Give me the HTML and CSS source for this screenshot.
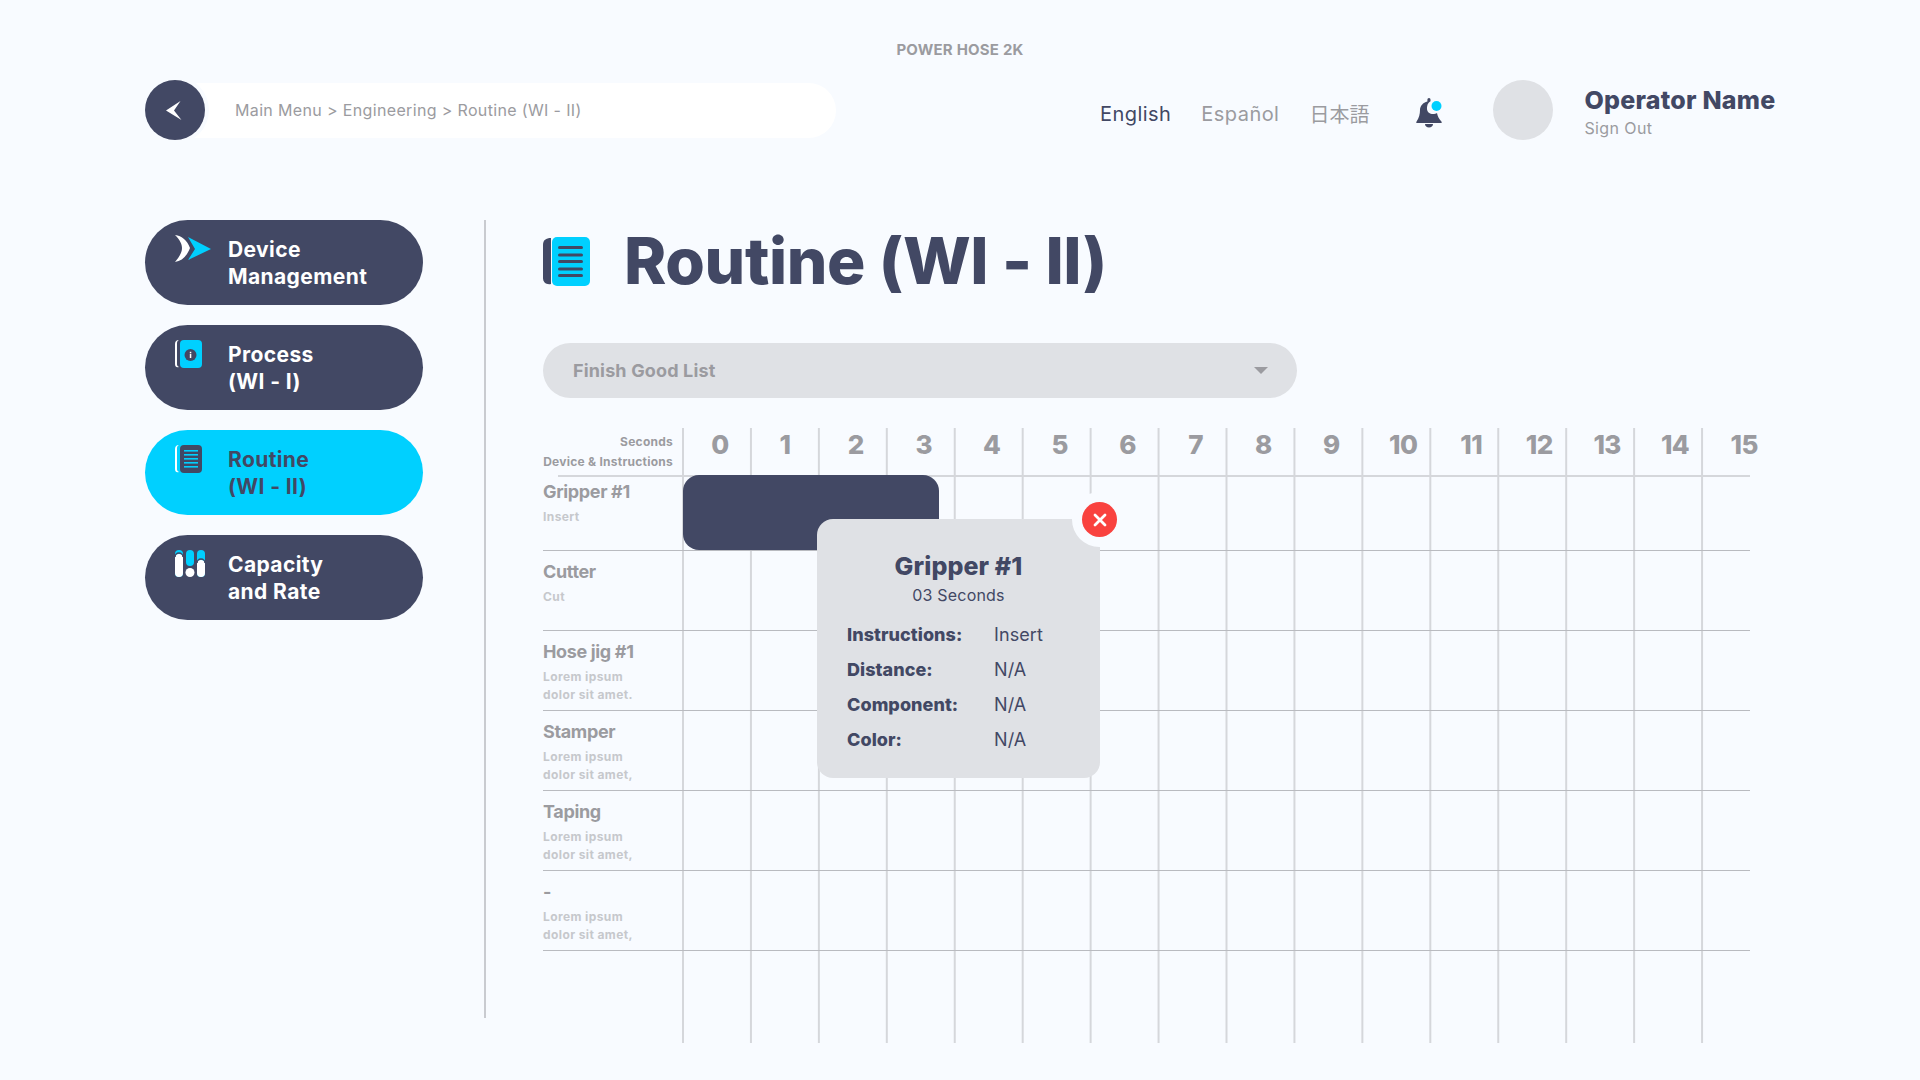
FILE: index.html
```html
<!DOCTYPE html>
<html lang="en">
<head>
    <meta charset="UTF-8">
    <title>Power Hose 2K - Routine (WI - II)</title>
    <link rel="stylesheet" href="styles.css">
</head>
<body>
    <div class="page">
        <div class="app-name">POWER HOSE 2K</div>

        <header class="topbar">
            <div class="crumbs">
                <button class="back-btn">
                    <svg width="16" height="19" viewBox="0 0 16 19"><path d="M14.500 0 L0 9.500 L15.500 19 L8 9.500 Z" fill="#fff"/></svg>
                </button>
                <span class="crumbs-text">Main Menu &gt; Engineering &gt; Routine (WI - II)</span>
            </div>
            <nav class="langs">
                <span class="lang lang-active">English</span>
                <span class="lang">Español</span>
                <span class="lang lang-jp">日本語</span>
            </nav>
            <svg class="bell" width="26" height="30" viewBox="0 0 26 30">
                <path d="M14.500 3.300C11.500 5 11 8 11 11c0 3 3 5 6 5 1.500 0 3-.4 4-1 .5 3 2 6 4.400 8.400.6.600.4 1.600-.4 1.600H1c-.8 0-1-1-.4-1.600C3 20 4 16 4 12c0-4 3-7.500 7.400-8.500V2c0-1.200.6-2 1.600-2s1.500.8 1.500 2z" fill="#424864"/>
                <path d="M9 26h8c0 2-1.800 3.500-4 3.500S9 28 9 26z" fill="#424864"/>
                <circle cx="20.500" cy="8" r="5" fill="#00d0ff"/>
            </svg>
            <div class="avatar"></div>
            <div class="operator">
                <div class="operator-name">Operator Name</div>
                <div class="sign-out">Sign Out</div>
            </div>
        </header>

        <div class="main">
            <aside class="sidebar">
                <a class="nav-item">
                    <svg class="nav-icon" width="36" height="27" viewBox="0 0 36 27">
                        <path d="M0 0 C7 1 12 5 15 13 C12 21 7 26 0 27 C5 21 7 17 7 13 C7 9 5 5 0 0 Z" fill="#fff"/>
                        <path d="M13 2 L36 14 L13 25 L20 14 Z" fill="#00d0ff"/>
                    </svg>
                    <span>Device<br>Management</span>
                </a>
                <a class="nav-item">
                    <svg class="nav-icon" width="27" height="28" viewBox="0 0 27 28">
                        <path d="M4 0 C1 0 0 2 0 4 V24 C0 26 1 28 4 27 C2 26 2 25 2 24 V4 C2 2 2 1 4 0 Z" fill="#fff"/>
                        <rect x="5" y="0" width="22" height="28" rx="4" fill="#00d0ff"/>
                        <circle cx="15.500" cy="15" r="6" fill="#424864"/>
                        <rect x="14.800" y="14" width="1.500" height="4" fill="#fff"/>
                        <rect x="14.800" y="11.800" width="1.500" height="1.500" fill="#fff"/>
                    </svg>
                    <span>Process<br>(WI - I)</span>
                </a>
                <a class="nav-item nav-item-active">
                    <svg class="nav-icon" width="27" height="28" viewBox="0 0 27 28">
                        <path d="M4 0 C1 0 0 2 0 4 V24 C0 26 1 28 4 27 C2 26 2 25 2 24 V4 C2 2 2 1 4 0 Z" fill="#fff"/>
                        <rect x="5" y="0" width="22" height="28" rx="4" fill="#424864"/>
                        <g fill="#00d0ff">
                            <rect x="9" y="5" width="14" height="1.600"/>
                            <rect x="9" y="9" width="14" height="1.600"/>
                            <rect x="9" y="13" width="14" height="1.600"/>
                            <rect x="9" y="17" width="14" height="1.600"/>
                            <rect x="9" y="21" width="14" height="1.600"/>
                        </g>
                    </svg>
                    <span>Routine<br>(WI - II)</span>
                </a>
                <a class="nav-item">
                    <svg class="nav-icon" width="30" height="27" viewBox="0 0 30 27">
                        <rect x="0" y="0" width="8" height="27" rx="4" fill="#00d0ff"/>
                        <path d="M0 8 a4 4 0 0 1 8 0 V23 a4 4 0 0 1 -8 0 Z" fill="#fff"/>
                        <path d="M0 7 a4 4 0 0 1 8 0" fill="none" stroke="#424864" stroke-width="1.500"/>
                        <rect x="11" y="0" width="8" height="16" rx="4" fill="#00d0ff"/>
                        <circle cx="15" cy="22.500" r="4.500" fill="#fff"/>
                        <rect x="22" y="0" width="8" height="27" rx="4" fill="#00d0ff"/>
                        <path d="M22 14 a4 4 0 0 1 8 0 V23 a4 4 0 0 1 -8 0 Z" fill="#fff"/>
                        <path d="M22 13 a4 4 0 0 1 8 0" fill="none" stroke="#424864" stroke-width="1.500"/>
                    </svg>
                    <span>Capacity<br>and Rate</span>
                </a>
            </aside>

            <section class="content">
                <div class="page-title">
                    <svg width="47" height="49" viewBox="0 0 47 49">
                        <path d="M8 1 C3 1 0 3 0 8 V41 C0 45 3 48 8 47 V1 Z" fill="#424864"/>
                        <rect x="9" y="0" width="38" height="49" rx="5" fill="#00d0ff"/>
                        <g fill="#424864">
                            <rect x="15" y="9" width="25" height="3" rx="1.500"/>
                            <rect x="15" y="16.500" width="25" height="3" rx="1.500"/>
                            <rect x="15" y="23" width="25" height="3" rx="1.500"/>
                            <rect x="15" y="30.500" width="25" height="3" rx="1.500"/>
                            <rect x="15" y="37" width="25" height="3" rx="1.500"/>
                        </g>
                    </svg>
                    <h1>Routine (WI - II)</h1>
                </div>

                <div class="select-box">
                    <span>Finish Good List</span>
                    <span class="caret"></span>
                </div>

                <div class="chart">
                    <div class="chart-lines"></div>

                    <div class="chart-head">
                        <div class="head-labels">
                            <div>Seconds</div>
                            <div>Device &amp; Instructions</div>
                        </div>
                        <div class="sec">0</div><div class="sec sec-one">1</div><div class="sec">2</div><div class="sec">3</div>
                        <div class="sec">4</div><div class="sec">5</div><div class="sec">6</div><div class="sec">7</div>
                        <div class="sec">8</div><div class="sec">9</div><div class="sec sec-wide">10</div><div class="sec sec-wide">11</div>
                        <div class="sec sec-wide">12</div><div class="sec sec-wide">13</div><div class="sec sec-wide">14</div><div class="sec">15</div>
                    </div>

                    <div class="row row-first">
                        <div class="row-name">Gripper #1</div>
                        <div class="row-sub">Insert</div>
                    </div>
                    <div class="row">
                        <div class="row-name">Cutter</div>
                        <div class="row-sub">Cut</div>
                    </div>
                    <div class="row">
                        <div class="row-name">Hose jig #1</div>
                        <div class="row-sub">Lorem ipsum<br>dolor sit amet.</div>
                    </div>
                    <div class="row">
                        <div class="row-name">Stamper</div>
                        <div class="row-sub">Lorem ipsum<br>dolor sit amet,</div>
                    </div>
                    <div class="row">
                        <div class="row-name">Taping</div>
                        <div class="row-sub">Lorem ipsum<br>dolor sit amet,</div>
                    </div>
                    <div class="row">
                        <div class="row-name">-</div>
                        <div class="row-sub">Lorem ipsum<br>dolor sit amet,</div>
                    </div>

                    <div class="bar"></div>

                    <div class="popup">
                        <button class="popup-close">
                            <svg width="14" height="14" viewBox="0 0 14 14"><path d="M2 2 L12 12 M12 2 L2 12" stroke="#fff" stroke-width="2.800" stroke-linecap="round"/></svg>
                        </button>
                        <h3>Gripper #1</h3>
                        <div class="popup-sub">03 Seconds</div>
                        <dl class="popup-info">
                            <dt>Instructions:</dt><dd>Insert</dd>
                            <dt>Distance:</dt><dd>N/A</dd>
                            <dt>Component:</dt><dd>N/A</dd>
                            <dt>Color:</dt><dd>N/A</dd>
                        </dl>
                    </div>
                </div>
            </section>
        </div>
    </div>
</body>
</html>
```

FILE: styles.css
```css
body {
    margin: 0;
    background-color: #f8fbff;
    font-family: Inter, "Noto Sans", sans-serif;
    color: #424864;
}

.page {
    width: 1920px;
    height: 1080px;
    overflow: hidden;
    padding: 40px 0 0 145px;
    box-sizing: border-box;
}

.app-name {
    margin-left: -145px;
    height: 20px;
    line-height: 20px;
    text-align: center;
    font-size: 15px;
    font-weight: 700;
    letter-spacing: 0.2px;
    color: #9b9ba0;
}

.topbar {
    display: flex;
    align-items: center;
    height: 60px;
    margin-top: 20px;
}

.crumbs {
    display: flex;
    align-items: center;
    flex: none;
    width: 691px;
    height: 55px;
    background-color: #fff;
    border-radius: 28px;
}

.back-btn {
    display: flex;
    align-items: center;
    justify-content: center;
    flex: none;
    width: 60px;
    height: 60px;
    padding: 0 2px 0 0;
    border: none;
    border-radius: 50%;
    background-color: #424864;
    box-shadow: 0 0 0 4px #f8fbff;
}

.crumbs-text {
    margin-left: 30px;
    font-size: 16px;
    letter-spacing: 0.35px;
    color: #9b9ba0;
}

.langs {
    display: flex;
    flex: none;
    align-items: center;
    height: 30px;
    margin-left: 264px;
    margin-top: 7px;
    gap: 30px;
    font-size: 20px;
    line-height: 30px;
    letter-spacing: 0.45px;
    color: #9b9ba0;
}

.lang-active {
    color: #424864;
}

.lang-jp {
    font-family: "Noto Sans CJK JP", sans-serif;
    letter-spacing: 0;
}

.bell {
    flex: none;
    margin-left: 47px;
    margin-top: 5px;
}

.avatar {
    flex: none;
    width: 60px;
    height: 60px;
    margin-left: 51px;
    border-radius: 50%;
    background-color: #dfe1e5;
}

.operator {
    flex: none;
    margin-left: 31px;
    padding-top: 4px;
}

.operator-name {
    font-size: 25px;
    line-height: 30px;
    font-weight: 800;
    letter-spacing: 0.25px;
}

.sign-out {
    font-size: 16px;
    line-height: 24px;
    margin-top: 1px;
    letter-spacing: 0.4px;
    color: #9b9ba0;
}

.main {
    display: flex;
    margin-top: 80px;
}

.sidebar {
    display: flex;
    flex-direction: column;
    gap: 20px;
    width: 278px;
    margin-right: 61px;
}

.nav-item {
    display: flex;
    height: 85px;
    box-sizing: border-box;
    padding: 15px 0 0 30px;
    border-radius: 43px;
    background-color: #424864;
    color: #fff;
    font-size: 21px;
    line-height: 27px;
    font-weight: 700;
    letter-spacing: 0.4px;
}

.nav-item span {
    position: absolute;
    margin-left: 53px;
    margin-top: 1px;
}

.nav-item-active {
    background-color: #00d0ff;
    color: #424864;
}

.content {
    width: 1267px;
    height: 798px;
    padding-left: 57px;
    border-left: 2px solid #c9cbd0;
    box-sizing: border-box;
}

.page-title {
    display: flex;
    align-items: center;
    height: 84px;
}

.page-title svg {
    flex: none;
    margin-top: -1px;
}

.page-title h1 {
    margin: -2px 0 0 34px;
    font-size: 64px;
    line-height: 84px;
    font-weight: 800;
    letter-spacing: -0.35px;
}

.select-box {
    display: flex;
    align-items: center;
    justify-content: space-between;
    width: 754px;
    height: 55px;
    margin-top: 39px;
    padding: 0 29px 0 30px;
    box-sizing: border-box;
    border-radius: 28px;
    background-color: #dfe1e5;
    font-size: 18px;
    font-weight: 700;
    letter-spacing: 0.15px;
    color: #9b9ba0;
}

.caret {
    width: 0;
    height: 0;
    border-left: 7px solid transparent;
    border-right: 7px solid transparent;
    border-top: 7px solid #9b9ba0;
}

.chart {
    position: relative;
    width: 1207px;
    height: 615px;
    margin-top: 30px;
}

.chart-lines {
    position: absolute;
    top: 0;
    bottom: 0;
    left: 139px;
    right: 0;
    background-image: linear-gradient(90deg, #d5d7db 2px, transparent 2px);
    background-size: 67.95px 100%;
}

.chart-head {
    position: relative;
    display: grid;
    grid-template-columns: 125px repeat(15, 67.95px) 1fr;
    height: 49px;
    box-sizing: border-box;
    margin-left: 15px;
    border-bottom: 2px solid #d5d7db;
}

.head-labels {
    margin-left: -15px;
    width: 130px;
    padding-top: 4px;
    text-align: right;
    font-size: 12px;
    line-height: 20px;
    font-weight: 700;
    letter-spacing: 0.25px;
    white-space: nowrap;
    color: #9b9ba0;
}

.sec {
    padding-left: 6px;
    text-align: center;
    font-size: 26px;
    line-height: 34px;
    font-weight: 800;
    letter-spacing: -0.5px;
    color: #9b9ba0;
}

.sec-one {
    padding-left: 0;
}

.sec-wide {
    padding-left: 14px;
}

.sec:last-child {
    padding-left: 0;
    margin-right: -8px;
    text-align: right;
}

.row {
    position: relative;
    height: 80px;
    box-sizing: border-box;
    padding-top: 9px;
    border-bottom: 1px solid #b9bbc0;
}

.row-first {
    height: 74px;
    padding-top: 3px;
}

.row-name {
    font-size: 18px;
    line-height: 24px;
    font-weight: 700;
    letter-spacing: -0.35px;
    color: #9b9ba0;
}

.row-sub {
    margin-top: 4px;
    font-size: 12px;
    line-height: 18px;
    font-weight: 700;
    letter-spacing: 0.4px;
    color: #c6c8cc;
}

.bar {
    position: absolute;
    left: 140px;
    top: 47px;
    width: 256px;
    height: 75px;
    border-radius: 16px;
    background-color: #424864;
}

.popup {
    position: absolute;
    left: 274px;
    top: 91px;
    width: 283px;
    height: 259px;
    padding-top: 31px;
    box-sizing: border-box;
    border-radius: 16px;
    background-color: #dfe1e5;
    text-align: center;
}

.popup-close {
    position: absolute;
    top: -17px;
    right: -17px;
    display: flex;
    align-items: center;
    justify-content: center;
    width: 35px;
    height: 35px;
    padding: 0;
    border: none;
    border-radius: 50%;
    background-color: #f9423f;
    box-shadow: 0 0 0 10px #f8fbff;
}

.popup h3 {
    margin: 0;
    font-size: 25px;
    line-height: 32px;
    font-weight: 800;
    letter-spacing: 0.1px;
}

.popup-sub {
    margin-top: 2px;
    font-size: 16px;
    line-height: 22px;
    letter-spacing: 0.2px;
}

.popup-info {
    display: grid;
    grid-template-columns: 147px 1fr;
    row-gap: 11px;
    margin: 17px 0 0 30px;
    text-align: left;
    font-size: 18px;
    line-height: 24px;
}

.popup-info dt {
    font-weight: 800;
    letter-spacing: 0.05px;
}

.popup-info dd {
    margin: 0;
    letter-spacing: 0.1px;
}
```
